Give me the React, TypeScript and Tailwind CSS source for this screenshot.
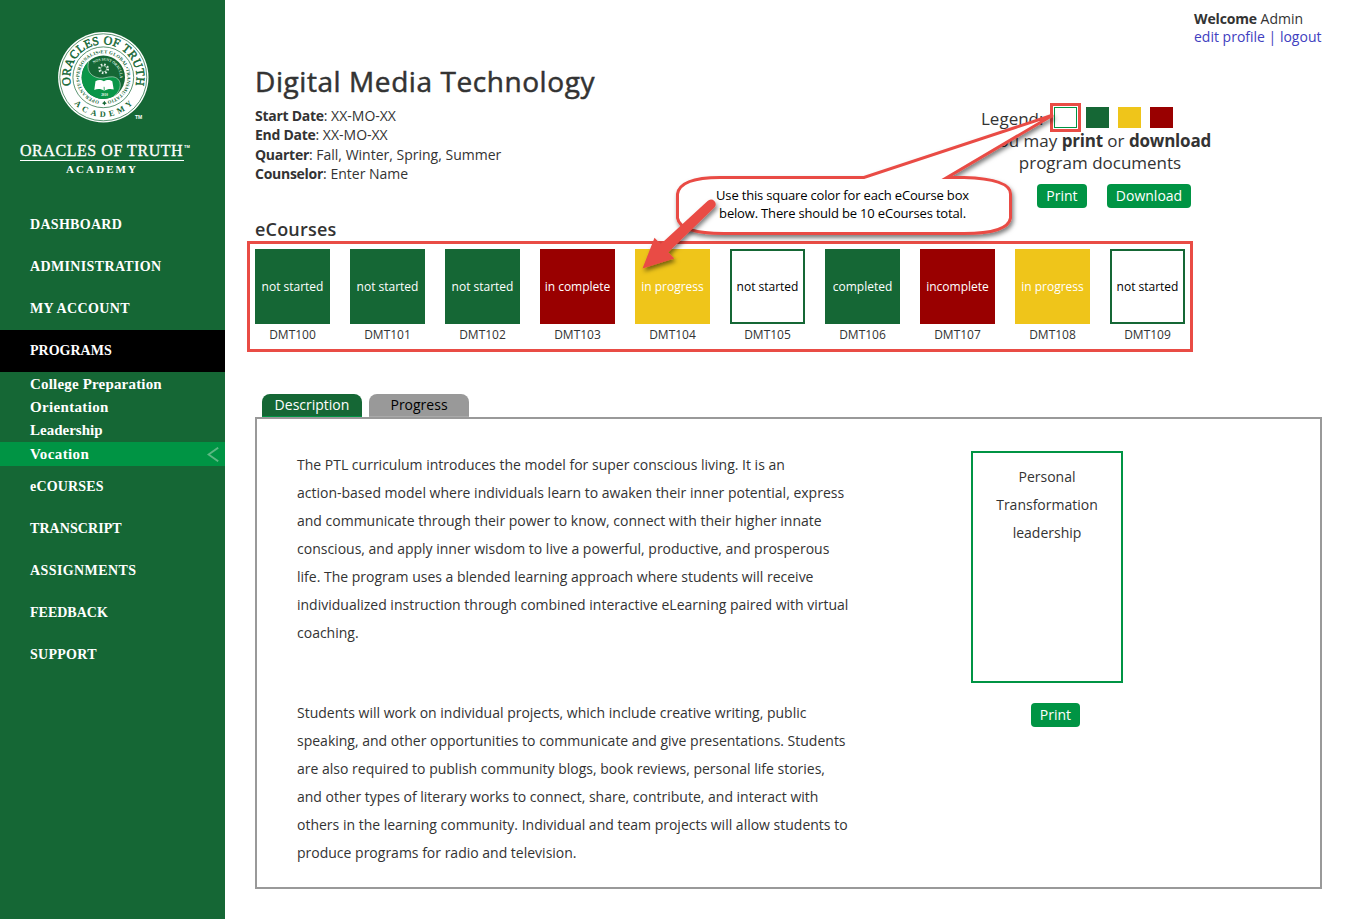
import React from "react";

type NavItem = { label: string; active?: boolean; tracking?: string };

const topNav: NavItem[] = [
  { label: "DASHBOARD", tracking: "tracking-[0.3px]" },
  { label: "ADMINISTRATION", tracking: "tracking-[0.36px]" },
  { label: "MY ACCOUNT", tracking: "tracking-[0.36px]" },
  { label: "PROGRAMS", active: true, tracking: "tracking-[0px]" },
];

const subNav: NavItem[] = [
  { label: "College Preparation", tracking: "tracking-[0.18px]" },
  { label: "Orientation", tracking: "tracking-[0.34px]" },
  { label: "Leadership", tracking: "tracking-[0px]" },
  { label: "Vocation", active: true, tracking: "tracking-[0.38px]" },
];

const bottomNav: NavItem[] = [
  { label: "eCOURSES", tracking: "tracking-[0.17px]" },
  { label: "TRANSCRIPT", tracking: "tracking-[0.07px]" },
  { label: "ASSIGNMENTS", tracking: "tracking-[0.4px]" },
  { label: "FEEDBACK", tracking: "tracking-[0px]" },
  { label: "SUPPORT", tracking: "tracking-[0.27px]" },
];

const tones = {
  green: "bg-[#156735] text-white",
  red: "bg-[#990000] text-white",
  yellow: "bg-[#efc51a] text-white",
  white: "border-2 border-[#156735] bg-white text-black",
};

const courses: { code: string; status: string; tone: keyof typeof tones }[] = [
  { code: "DMT100", status: "not started", tone: "green" },
  { code: "DMT101", status: "not started", tone: "green" },
  { code: "DMT102", status: "not started", tone: "green" },
  { code: "DMT103", status: "in complete", tone: "red" },
  { code: "DMT104", status: "in progress", tone: "yellow" },
  { code: "DMT105", status: "not started", tone: "white" },
  { code: "DMT106", status: "completed", tone: "green" },
  { code: "DMT107", status: "incomplete", tone: "red" },
  { code: "DMT108", status: "in progress", tone: "yellow" },
  { code: "DMT109", status: "not started", tone: "white" },
];

const paragraphs = [
  [
    "The PTL curriculum introduces the model for super conscious living. It is an",
    "action-based model where individuals learn to awaken their inner potential, express",
    "and communicate through their power to know, connect with their higher innate",
    "conscious, and apply inner wisdom to live a powerful, productive, and prosperous",
    "life. The program uses a blended learning approach where students will receive",
    "individualized instruction through combined interactive eLearning paired with virtual",
    "coaching.",
  ],
  [
    "Students will work on individual projects, which include creative writing, public",
    "speaking, and other opportunities to communicate and give presentations. Students",
    "are also required to publish community blogs, book reviews, personal life stories,",
    "and other types of literary works to connect, share, contribute, and interact with",
    "others in the learning community. Individual and team projects will allow students to",
    "produce programs for radio and television.",
  ],
];

function Seal() {
  return (
    <svg className="block h-[94px] w-[94px]" viewBox="-47.300 -47.300 94 94" fontFamily="'Liberation Serif', serif" fontWeight="700">
      <defs>
        <path id="outerTop" d="M-31.4 11A33.2 33.2 0 1 1 31.4 11" />
        <path id="outerBottom" d="M-39.5 0A39.5 39.5 0 0 0 39.5 0" />
        <path id="middle" d="M-2 23.900A24 24 0 1 1 2 23.900" />
        <path id="inner" d="M-11.5 -12A16.6 16.6 0 0 1 16.300 3.500" />
      </defs>
      <circle r="45.2" fill="#fff" />
      <circle r="43.5" fill="none" stroke="#156735" strokeWidth=".7" />
      <circle r="30.4" fill="none" stroke="#156735" strokeWidth=".7" />
      <circle r="21.7" fill="#156735" />
      <path d="M-14.5 -16.1A21.7 21.7 0 0 0 10.5 19C20 12 18.500 0 9 -.5C4 -.8 1 1.500 -4 .8C-14 -1 -17 -8 -14.500 -16.100Z" fill="#0a9648" />
      <path d="M-14.500 -16.100C-17 -8 -14 -1 -4 .8C1 1.500 4 -.8 9 -.5C18.500 0 20 12 10.500 19" fill="none" stroke="#cfe6d6" strokeWidth=".6" />
      <g fill="none" stroke="#e5f2e9">
        <circle cx=".3" cy="-8.500" r="4.300" strokeDasharray="1.600 1.777" strokeWidth="2.200" />
        <circle cx=".3" cy="-8.500" r="3" strokeWidth=".5" />
      </g>
      <path d="M-7.800 4C-5 2 -1.800 2.400 .6 4C3 2.400 6.600 2 9 4L10.400 12.200C7.500 11.200 4 11.500 1 13.400C-2 11.500 -6 11.200 -9 12.800Z" fill="#fff" />
      <path d="M.8 9.500L1 13.200" stroke="#0a9648" strokeWidth=".8" fill="none" />
      <text x="1.200" y="18.500" fontSize="3.300" textAnchor="middle" fill="#fff">2010</text>
      <g fill="#156735">
        <text fontSize="12" fontWeight="400" stroke="#156735" strokeWidth=".45">
          <textPath href="#outerTop" startOffset="50%" textAnchor="middle" textLength="120" lengthAdjust="spacing">ORACLES OF TRUTH</textPath>
        </text>
        <text fontSize="8.200">
          <textPath href="#outerBottom" startOffset="50%" textAnchor="middle" textLength="66" lengthAdjust="spacing">ACADEMY</textPath>
        </text>
        <text fontSize="4.800">
          <textPath href="#middle" startOffset="50%" textAnchor="middle" textLength="142" lengthAdjust="spacing">OPERANTES•PERSONALIS•ET GLOBAL•TRANSMUTATIO</textPath>
        </text>
        <path d="M1.100 23.500L2 25L3.500 25.900L2 26.800L1.100 28.300L.2 26.800L-1.300 25.900L.2 25Z" />
      </g>
      <text fontSize="4" fill="#d9ecdf">
        <textPath href="#inner" startOffset="50%" textAnchor="middle" textLength="37" lengthAdjust="spacingAndGlyphs">NOS SUNT ORACULA</textPath>
      </text>
    </svg>
  );
}

function NavRow({ label, active, tracking = "" }: NavItem) {
  return (
    <li className={`flex h-[42px] items-center pl-[30px] text-[14px] ${tracking} ${active ? "bg-black" : ""}`}>
      <span className="pb-px">{label}</span>
    </li>
  );
}

function Sidebar() {
  return (
    <aside className="flex h-[919px] w-[225px] shrink-0 flex-col bg-[#156735] font-['Liberation_Serif',serif] text-white">
      <div className="flex h-[204px] flex-col pt-[30px]">
        <div className="flex pl-[56px]">
          <Seal />
          <span className="-ml-[15px] self-end pb-px font-['Liberation_Sans',sans-serif] text-[5px] leading-[12px] font-bold">TM</span>
        </div>
        <div className="ml-[20px] flex items-start pt-[18px]">
          <span className="w-[164px] border-b border-white text-[16px] leading-[18px] tracking-[0.55px] whitespace-nowrap [-webkit-text-stroke:0.3px_white]">
            ORACLES OF TRUTH
          </span>
          <span className="pt-[2px] font-['Liberation_Sans',sans-serif] text-[4px] leading-[5px] font-bold">TM</span>
        </div>
        <span className="ml-[66px] pt-[2px] text-[11px] leading-[13px] font-bold tracking-[2.100px]">ACADEMY</span>
      </div>
      <ul className="font-bold">
        {topNav.map((n) => (
          <NavRow key={n.label} {...n} />
        ))}
        <li>
          <ul className="h-[94px] text-[15px] leading-[23px]">
            {subNav.map((n) => (
              <li
                key={n.label}
                className={`flex items-center justify-between pr-[6px] pl-[30px] ${n.tracking} ${n.active ? "h-[24px] bg-[#009444] pt-px" : "h-[23.330px] first:h-[24px] nth-2:h-[23px] nth-3:h-[23px]"}`}
              >
                {n.label}
                {n.active && (
                  <svg className="h-[15px] w-[12px]" viewBox="0 0 12 15" fill="none" stroke="#5cb883" strokeWidth="1.900">
                    <path d="M11.200 .7L1.500 7.500L11.200 14.300" />
                  </svg>
                )}
              </li>
            ))}
          </ul>
        </li>
        {bottomNav.map((n) => (
          <NavRow key={n.label} {...n} />
        ))}
      </ul>
    </aside>
  );
}

function Button({ children, className = "" }: { children: React.ReactNode; className?: string }) {
  return (
    <button className={`h-[24px] rounded-[4px] bg-[#009444] text-center text-[14px] leading-[24px] text-white ${className}`}>
      {children}
    </button>
  );
}

function Callout() {
  return (
    <div className="pointer-events-none absolute top-0 left-0 h-[300px] w-[1100px]">
      <svg className="absolute top-0 left-0" width="1100" height="300" viewBox="0 0 1100 300">
        <defs>
          <filter id="soft" x="-10%" y="-10%" width="120%" height="130%">
            <feDropShadow dx="1.500" dy="3" stdDeviation="2" floodColor="#000" floodOpacity=".5" />
          </filter>
        </defs>
        <path
          d="M720 177.500H864L1053 115L947 177.500H964Q1010.500 179 1010.500 194V218Q1008 233.500 964 233.500H724Q680 233.500 677.500 218V194Q680 177.500 720 177.500Z"
          fill="#fff"
          stroke="#e94c45"
          strokeWidth="3"
          filter="url(#soft)"
        />
      </svg>
      <p className="absolute top-[186px] left-[692px] w-[301px] text-center text-[13px] leading-[18px] tracking-[-0.17px] whitespace-nowrap text-black">
        Use this square color for each eCourse box
        <br />
        below. There should be 10 eCourses total.
      </p>
      <svg className="absolute top-0 left-0" width="1100" height="300" viewBox="0 0 1100 300">
        <path
          d="M707.600 201A4.700 4.700 0 0 1 714.400 207.600L668.300 252.300L674.300 258.400L642.500 268.500L654.500 237.700L660.800 244Z"
          fill="#e94c45"
          filter="url(#soft)"
        />
      </svg>
    </div>
  );
}

export default function App() {
  return (
    <div className="relative flex h-[919px] w-[1352px] overflow-hidden bg-white font-['Open_Sans',sans-serif] text-[14px] text-[#333]">
      <Sidebar />
      <main className="flex w-[1127px] flex-col pr-[30px] pl-[30px]">
        <div className="ml-[939px] h-[57px] pt-[10px] leading-[18px] whitespace-nowrap">
          <p>
            <b className="tracking-[-0.14px]">Welcome</b> Admin
          </p>
          <p className="text-[#4040c0]">
            <a>edit profile</a> | <a>logout</a>
          </p>
        </div>

        <section className="flex h-[160px]">
          <div className="w-[726px]">
            <h1 className="h-[49px] text-[28px] leading-[49px] tracking-[0.57px] whitespace-nowrap [-webkit-text-stroke:0.5px_#333]">
              Digital Media Technology
            </h1>
            <div className="text-[14px] leading-[19.400px] [&_b]:tracking-[-0.27px]">
              <p><b>Start Date</b>: XX-MO-XX</p>
              <p><b>End Date</b>: XX-MO-XX</p>
              <p><b>Quarter</b>: Fall, Winter, Spring, Summer</p>
              <p><b>Counselor</b>: Enter Name</p>
            </div>
          </div>
          <div className="w-[238px] pt-[50px] text-[17px] leading-[22px] whitespace-nowrap">
            <div className="flex h-[23px]">
              <span className="w-[73px] pt-px">Legend:</span>
              <div className="flex gap-[9px]">
                <span className="relative h-[21px] w-[23px] border border-[#009444]">
                  <span className="absolute -top-[5px] -left-[5px] h-[29px] w-[31px] border-3 border-[#e94c45]" />
                </span>
                <span className="h-[21px] w-[23px] bg-[#156735]" />
                <span className="h-[21px] w-[23px] bg-[#efc51a]" />
                <span className="h-[21px] w-[23px] bg-[#990000]" />
              </div>
            </div>
            <p className="text-center [&_b]:tracking-[-0.2px]">
              You may <b>print</b> or <b>download</b>
              <br />
              program documents
            </p>
            <div className="flex gap-[20px] pt-[10px] pl-[56px]">
              <Button className="w-[50px]">Print</Button>
              <Button className="w-[84px]">Download</Button>
            </div>
          </div>
        </section>

        <h2 className="h-[24px] text-[18px] leading-[25px] font-semibold tracking-[0.2px]">eCourses</h2>
        <section className="-ml-[8px] flex h-[111px] w-[946px] gap-[20px] border-3 border-[#e94c45] pt-[5px] pl-[5px]">
          {courses.map((c) => (
            <div key={c.code} className="flex w-[75px] flex-col items-center">
              <div className={`flex h-[75px] w-[75px] items-center justify-center text-[12px] whitespace-nowrap ${tones[c.tone]}`}>
                {c.status}
              </div>
              <span className="text-[12px] leading-[22px]">{c.code}</span>
            </div>
          ))}
        </section>

        <div className="flex h-[65px] items-end gap-[7px] pl-[7px] text-center leading-[22px]">
          <div className="h-[23px] w-[100px] rounded-t-[8px] border-b border-[#009444] bg-[#156735] text-white">Description</div>
          <div className="h-[23px] w-[100px] rounded-t-[8px] border-b border-[#aaa] bg-[#999] text-black">Progress</div>
        </div>
        <section className="flex h-[472px] w-[1067px] border-2 border-[#999] pt-[32px] pl-[40px]">
          <div className="flex w-[674px] flex-col gap-[52px] leading-[28px] whitespace-nowrap">
            {paragraphs.map((lines, i) => (
              <p key={i}>
                {lines.map((l) => (
                  <span key={l} className="block">{l}</span>
                ))}
              </p>
            ))}
          </div>
          <div className="flex w-[152px] flex-col">
            <div className="h-[232px] border-2 border-[#009444] pt-[10px] text-center leading-[28px]">
              Personal
              <br />
              Transformation
              <br />
              leadership
            </div>
            <Button className="mt-[20px] ml-[60px] w-[49px]">Print</Button>
          </div>
        </section>
      </main>
      <Callout />
    </div>
  );
}
